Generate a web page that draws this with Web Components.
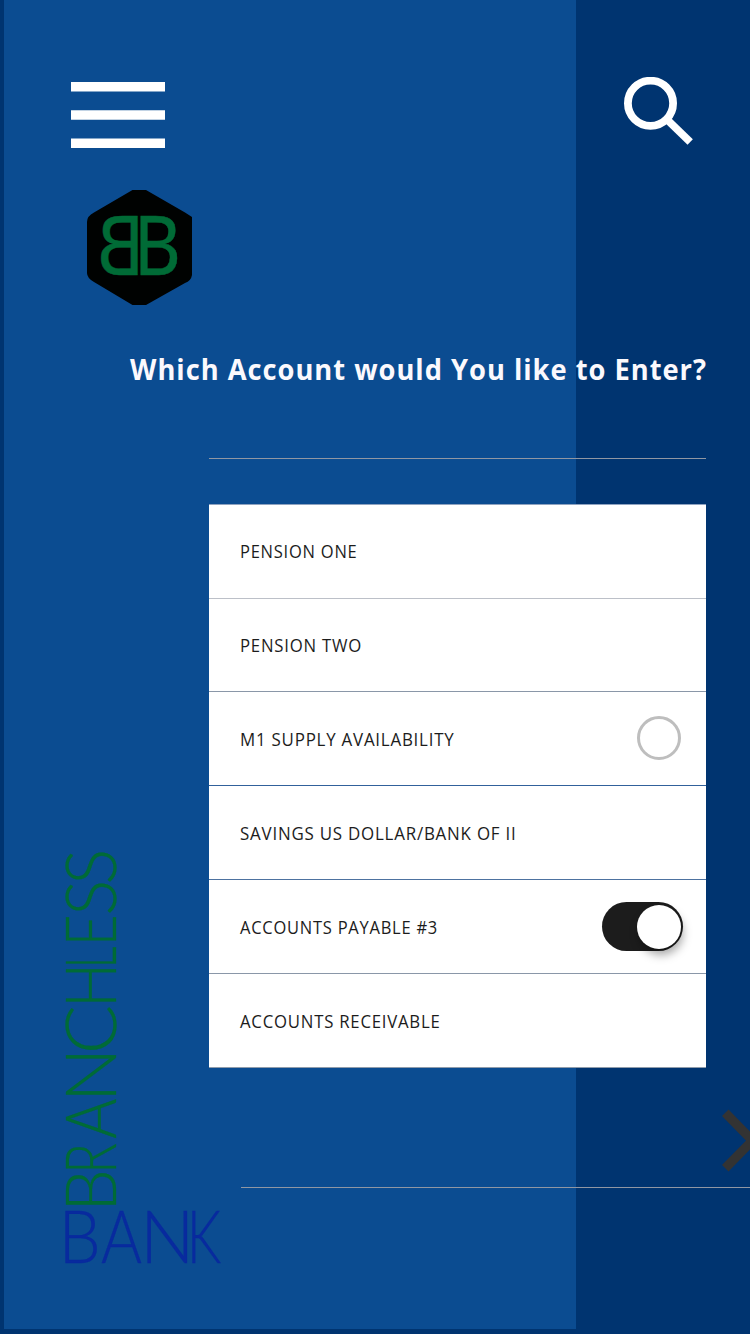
<!DOCTYPE html>
<html lang="en">
<head>
<meta charset="utf-8">
<title>Branchless Bank</title>
<style>
html,body{margin:0;padding:0}
body{width:750px;height:1334px;overflow:hidden;font-family:"Open Sans","Noto Sans",sans-serif}
</style>
</head>
<body>
<bank-screen></bank-screen>
<script>
const make = (name, html, setup) => customElements.define(name, class extends HTMLElement {
  constructor() {
    super();
    this.attachShadow({ mode: "open" }).innerHTML = html;
  }
  connectedCallback() { if (setup) setup(this, this.shadowRoot); }
});

// Text line set to an exact measure
make("fit-text", `<style>
  :host{display:block}
  svg{display:block;overflow:visible}
</style><svg><text></text></svg>`, (el, root) => {
  const svg = root.querySelector("svg"), t = root.querySelector("text");
  const size = +el.getAttribute("size"), w = +el.getAttribute("width");
  svg.setAttribute("width", w);
  svg.setAttribute("height", size);
  t.textContent = el.getAttribute("text");
  t.setAttribute("y", size * 0.86);
  t.setAttribute("textLength", w);
  t.setAttribute("lengthAdjust", "spacingAndGlyphs");
  t.setAttribute("fill", el.getAttribute("color"));
  t.setAttribute("font-size", size);
  t.setAttribute("font-weight", el.getAttribute("weight") || 400);
  t.style.letterSpacing = el.getAttribute("spacing") + "px";
});

// Display lettering: every letter gets its own start and ink width
make("display-letters", `<style>
  :host{display:block;height:71px;white-space:nowrap;font:300 71px/71px Lato,sans-serif;-webkit-text-stroke:.3px currentColor}
  div{display:flex}
  span{display:block;flex:none;transform-origin:0 63px}
</style><div></div>`, (el, root) => {
  const row = root.querySelector("div"), word = el.getAttribute("word");
  const nums = k => el.getAttribute(k).split(" ").map(Number);
  const starts = nums("starts"), widths = nums("widths"), tall = el.getAttribute("tall") || 1;
  const ctx = document.createElement("canvas").getContext("2d");
  ctx.font = "300 71px Lato, sans-serif";
  [...word].forEach((c, i) => {
    const m = ctx.measureText(c), left = -m.actualBoundingBoxLeft;
    const s = widths[i] / (m.actualBoundingBoxRight - left);
    const span = document.createElement("span");
    span.textContent = c;
    span.style.width = (i + 1 < starts.length ? starts[i + 1] - starts[i] : widths[i]) + "px";
    span.style.transform = `translateX(${-left * s}px) scale(${s}, ${tall})`;
    row.append(span);
  });
});

make("menu-icon", `<style>
  :host{display:block;width:94px;height:66px}
  svg{display:block}
</style><svg width="94" height="66" fill="#fff"><path d="M0 0h94v9.4H0zM0 28.3h94v9.4H0zM0 56.6h94V66H0z"/></svg>`);

make("search-icon", `<style>
  :host{display:block;width:70px;height:70px}
  svg{display:block}
</style><svg width="70" height="70" fill="none" stroke="#fff"><circle cx="26.500" cy="26.300" r="22.600" stroke-width="7.800"/><path d="M43 42.500 66.200 65" stroke-width="7.600"/></svg>`);

make("bank-logo", `<style>
  :host{display:block;width:105px;height:115px}
  svg{display:block;overflow:visible}
  text{font:400 82.5px "Noto Sans",sans-serif}
</style><svg width="105" height="115">
  <path fill="#000201" d="M45.500 0H59L98 22.500 105 27V85Q104 91 98 93L59 115H45.500L7 92Q0 88 0 83V32Q0 26 7 22.500Z"/>
  <g fill="#006b36" stroke="#006b36" stroke-width=".5">
    <text transform="translate(46.700 85.200) scale(.88 1)">B</text>
    <text transform="translate(57.500 85.200) scale(-.88 1)">B</text>
  </g>
</svg>`);

make("top-bar", `<style>
  :host{display:flex;justify-content:space-between;align-items:flex-start;height:71px;padding:0 56px 0 67px}
  menu-icon{margin-top:5px}
</style><menu-icon></menu-icon><search-icon></search-icon>`);

make("toggle-switch", `<style>
  :host{display:flex;box-sizing:border-box;width:81px;height:49px;margin-top:.6px;padding:2px 2px;border-radius:25px;background:#1c1c1c;justify-content:flex-end;align-items:center}
  i{width:44.500px;height:44.500px;border-radius:50%;background:#fff;box-shadow:2px 6px 10px rgba(0,0,0,.35)}
</style><i></i>`);

make("radio-ring", `<style>
  :host{display:block;box-sizing:border-box;width:44px;height:44px;margin:-1px 2px 0 0;border:3px solid #bebebe;border-radius:50%}
</style>`);

make("account-row", `<style>
  :host{display:flex;box-sizing:border-box;height:94px;justify-content:space-between;align-items:center;padding:0 23px 0 31px;border-top:1px solid var(--line,#8a97a8);background:#fff}
  fit-text{margin-top:var(--drop,2px)}
</style><fit-text></fit-text><slot></slot>`, (el, root) => {
  const old = root.querySelector("fit-text"), t = document.createElement("fit-text");
  for (const [k, v] of Object.entries({ text: el.getAttribute("label"), width: el.getAttribute("measure"), size: 17.5, spacing: 0.8, color: "#1c1c1c" })) t.setAttribute(k, v);
  old.replaceWith(t);
});

make("account-list", `<style>
  :host{display:flex;flex-direction:column;width:497px;background:#fff;border-bottom:1px solid #8f9cab}
</style>
<account-row label="PENSION ONE" measure="117.500" style="--line:#8fa3c0;--drop:0"></account-row>
<account-row label="PENSION TWO" measure="122" style="--line:#bcc0c8;height:93px"></account-row>
<account-row label="M1 SUPPLY AVAILABILITY" measure="214.500"><radio-ring></radio-ring></account-row>
<account-row label="SAVINGS US DOLLAR/BANK OF II" measure="276.500" style="--line:#31619b"></account-row>
<account-row label="ACCOUNTS PAYABLE #3" measure="198" style="--line:#4d72a0"><toggle-switch></toggle-switch></account-row>
<account-row label="ACCOUNTS RECEIVABLE" measure="200.500"></account-row>`);

make("bank-wordmark", `<style>
  :host{display:block;width:160px;height:416px}
  .up{width:355px;color:#006b36;transform-origin:0 0;transform:translate(-12px,353.8px) rotate(-90deg)}
  .flat{width:160px;color:#082a9e;margin-top:278px}
</style>
<display-letters class="up" word="BRANCHLESS" starts="0 36 66 110 154.5 203.3 241.5 264 292 323.5" widths="32 25.5 39.7 40.5 43 33.3 16.7 24 30 30"></display-letters>
<display-letters class="flat" word="BANK" tall="1.025" starts="0 36 82 127" widths="32 40.5 40.7 29"></display-letters>`);

make("next-chevron", `<style>
  :host{display:block;width:28px;height:64px;overflow:hidden}
  svg{display:block}
</style><svg width="28" height="64" fill="none" stroke="#333"><path d="M3.250 3.800 30.400 31.600 3.250 59.300" stroke-width="9.200"/></svg>`);

make("bank-screen", `<style>
  :host{display:block;box-sizing:border-box;width:750px;height:1334px;padding:77px 0 0 4px;overflow:hidden;
    background:linear-gradient(#0b4c91,#0b4c91) 4px 0/572px 1329px no-repeat,#003470}
  bank-logo{margin:42px 0 0 83px}
  .title{margin:51px 0 0 126px}
  hr{height:1px;border:0;margin:0;background:#9097a3}
  .rule{width:497px;margin:74px 0 45px 205px}
  .body{display:grid;grid-template-columns:205px 1fr;height:830px}
  bank-wordmark{margin:347px 0 0 61px}
  .foot{display:flex;flex-direction:column}
  next-chevron{align-self:flex-end;margin-top:41px}
  .foot hr{margin:14px 0 0 32px}
</style>
<top-bar></top-bar>
<bank-logo></bank-logo>
<fit-text class="title" text="Which Account would You like to Enter?" width="577" size="28" weight="700" spacing="1" color="#fbf9fd"></fit-text>
<hr class="rule">
<div class="body">
  <bank-wordmark></bank-wordmark>
  <div class="foot"><account-list></account-list><next-chevron></next-chevron><hr></div>
</div>`);
</script>
</body>
</html>
